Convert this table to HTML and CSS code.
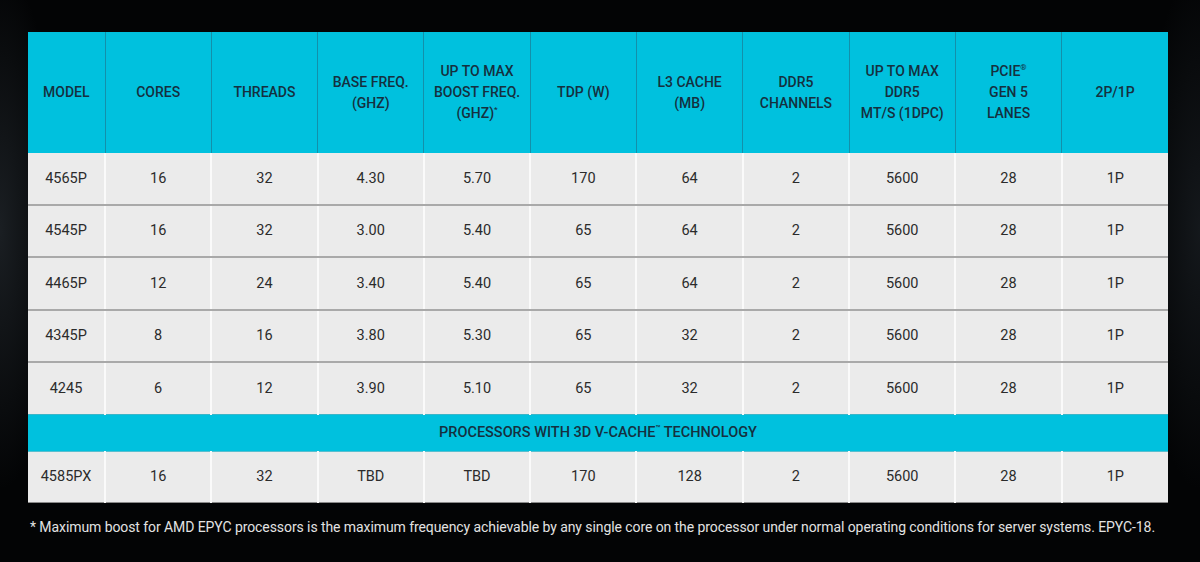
FILE: index.html
```html
<!DOCTYPE html>
<html>
<head>
<meta charset="utf-8">
<link rel="stylesheet" href="styles.css">
</head>
<body>
<div class="page">
  <table class="specs">
    <colgroup>
      <col class="c-model">
      <col span="10" class="c-std">
    </colgroup>
    <thead>
      <tr>
        <th>MODEL</th>
        <th>CORES</th>
        <th>THREADS</th>
        <th>BASE FREQ.<br>(GHZ)</th>
        <th>UP TO MAX<br>BOOST FREQ.<br>(GHZ)<sup>*</sup></th>
        <th>TDP (W)</th>
        <th>L3 CACHE<br>(MB)</th>
        <th>DDR5<br>CHANNELS</th>
        <th>UP TO MAX<br>DDR5<br>MT/S (1DPC)</th>
        <th>PCIE<sup>®</sup><br>GEN 5<br>LANES</th>
        <th>2P/1P</th>
      </tr>
    </thead>
    <tbody>
      <tr><td>4565P</td><td>16</td><td>32</td><td>4.30</td><td>5.70</td><td>170</td><td>64</td><td>2</td><td>5600</td><td>28</td><td>1P</td></tr>
      <tr><td>4545P</td><td>16</td><td>32</td><td>3.00</td><td>5.40</td><td>65</td><td>64</td><td>2</td><td>5600</td><td>28</td><td>1P</td></tr>
      <tr><td>4465P</td><td>12</td><td>24</td><td>3.40</td><td>5.40</td><td>65</td><td>64</td><td>2</td><td>5600</td><td>28</td><td>1P</td></tr>
      <tr><td>4345P</td><td>8</td><td>16</td><td>3.80</td><td>5.30</td><td>65</td><td>32</td><td>2</td><td>5600</td><td>28</td><td>1P</td></tr>
      <tr class="before-band"><td>4245</td><td>6</td><td>12</td><td>3.90</td><td>5.10</td><td>65</td><td>32</td><td>2</td><td>5600</td><td>28</td><td>1P</td></tr>
      <tr class="band"><td colspan="11">PROCESSORS WITH 3D V-CACHE<sup>™</sup> TECHNOLOGY</td></tr>
      <tr class="last"><td>4585PX</td><td>16</td><td>32</td><td>TBD</td><td>TBD</td><td>170</td><td>128</td><td>2</td><td>5600</td><td>28</td><td>1P</td></tr>
    </tbody>
  </table>
  <p class="note">* Maximum boost for AMD EPYC processors is the maximum frequency achievable by any single core on the processor under normal operating conditions for server systems. EPYC-18.</p>
</div>
</body>
</html>
```

FILE: styles.css
```css
html, body {
  margin: 0;
  padding: 0;
}
body {
  width: 1200px;
  height: 562px;
  overflow: hidden;
  background:
    radial-gradient(ellipse 60px 260px at 0px 230px, rgba(70,80,90,0.35), rgba(0,0,0,0) 100%),
    radial-gradient(ellipse 60px 260px at 1200px 230px, rgba(60,70,80,0.3), rgba(0,0,0,0) 100%),
    #030405;
  font-family: Roboto, "Liberation Sans", sans-serif;
}
.page {
  padding: 32px 0 0 28px;
}
.specs {
  width: 1140px;
  border-collapse: collapse;
  table-layout: fixed;
}
.c-model { width: 77px; }
.c-std { width: 106.3px; }
.specs th {
  background: #00c1de;
  color: #15303f;
  font-weight: 500;
  font-size: 14px;
  line-height: 21px;
  height: 121px;
  padding: 0 2px;
  box-sizing: border-box;
  text-align: center;
  vertical-align: middle;
  border-left: 1px solid #1390aa;
}
.specs th:first-child { border-left: none; }
.specs sup {
  font-size: 8px;
  line-height: 0;
  vertical-align: 6px;
}
.specs td {
  background: #ebebeb;
  color: #2b2b2b;
  font-size: 14.5px;
  height: 50.5px;
  padding: 0;
  text-align: center;
  vertical-align: middle;
  border-left: 2px solid #fafafa;
  border-bottom: 2px solid #a9a9a9;
}
.specs td:first-child { border-left: none; }
.specs tr.before-band td { border-bottom: 1px solid #3bb5c8; height: 50.5px; }
.specs tr.band td {
  background: #00c1de;
  color: #15303f;
  font-weight: 500;
  height: 36px;
  border-bottom: 1px solid #58bfcf;
  font-size: 14.5px;
}
.specs tr.last td { border-bottom: 1px solid #8a8a8a; height: 50px; }
.note {
  margin: 16px 0 0 2px;
  color: #e2e2e2;
  font-size: 14px;
  letter-spacing: -0.08px;
  white-space: nowrap;
}
```
